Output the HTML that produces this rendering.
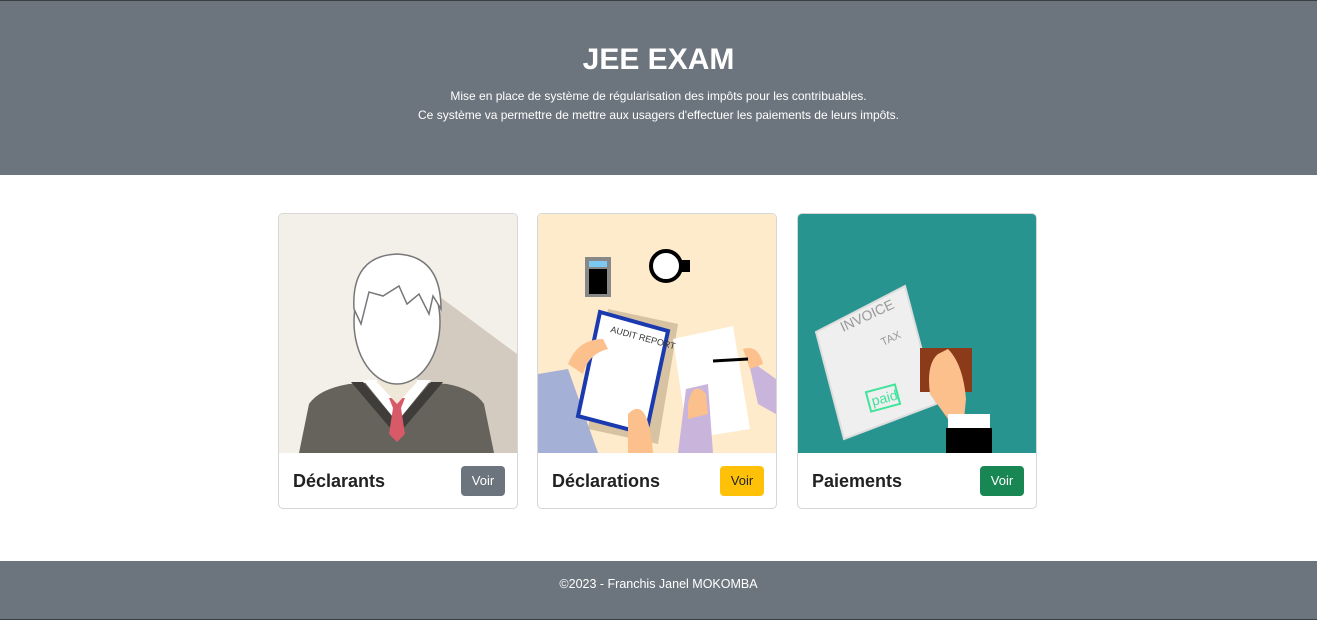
<!DOCTYPE html>
<html><head><meta charset="utf-8"><style>
*{box-sizing:border-box;margin:0;padding:0}
body{width:1317px;height:620px;background:#fff;font-family:"Liberation Sans",sans-serif;overflow:hidden;position:relative}
header{position:absolute;left:0;top:0;width:1317px;height:175px;background:#6c757d;border-top:1px solid #3a3f44;color:#fff;text-align:center}
header h1{position:absolute;top:42px;width:100%;font-size:30px;font-weight:bold}
header p{position:absolute;top:86px;width:100%;font-size:12px;line-height:19px}
.card{position:absolute;top:213px;width:240px;height:296px;border:1px solid #d6d6d6;border-radius:5px;overflow:hidden;background:#fff}
.card svg{display:block;width:238px;height:239px}
.card h3{position:absolute;left:14px;top:257px;font-size:18px;font-weight:bold;color:#222}
.btn{position:absolute;right:12px;top:252px;width:44px;height:30px;border-radius:4px;font-size:13px;line-height:30px;text-align:center}
footer{position:absolute;left:0;top:561px;width:1317px;height:59px;background:#6c757d;color:#fff;text-align:center;font-size:12.5px;line-height:46px;border-bottom:1px solid #3a3f44}
</style></head><body>
<header><h1>JEE EXAM</h1><p>Mise en place de système de régularisation des impôts pour les contribuables.<br>Ce système va permettre de mettre aux usagers d'effectuer les paiements de leurs impôts.</p></header>

<div class="card" style="left:278px">
<svg viewBox="0 0 238 239"><rect width="238" height="239" fill="#f3efe9"/>
<polygon points="130,60 238,140 238,239 140,239" fill="#d3cac0"/>
<path d="M20,239 L30,190 Q40,175 70,170 L100,168 L118,188 L136,168 L168,170 Q195,175 205,190 L215,239Z" fill="#66635c"/>
<path d="M72,168 L118,222 L164,168 L152,168 L118,208 L84,168Z" fill="#3f3d39"/>
<path d="M84,166 L118,208 L152,166Z" fill="#fff"/>
<path d="M110,184 L126,184 L122,194 L126,220 L118,228 L110,220 L114,194Z" fill="#d85a68"/>
<path d="M98,140 L98,168 L118,190 L138,168 L138,140Z" fill="#efe7d8"/>
<ellipse cx="118" cy="108" rx="43" ry="62" fill="#fff" stroke="#777" stroke-width="1.5"/>
<path d="M75,95 Q72,42 118,40 Q162,42 162,95 L154,82 L150,100 L140,80 L128,90 L120,72 L104,82 L90,78 L82,110Z" fill="#fff" stroke="#777" stroke-width="1.5"/>
</svg>
<h3>Déclarants</h3><div class="btn" style="background:#6c757d;color:#fff">Voir</div></div>

<div class="card" style="left:537px">
<svg viewBox="0 0 238 239"><rect width="238" height="239" fill="#feebcb"/>
<rect x="47" y="43" width="26" height="40" fill="#888"/><rect x="51" y="47" width="18" height="6" fill="#7bc8f0"/><rect x="51" y="55" width="18" height="25" fill="#000"/>
<circle cx="128" cy="52" r="15" fill="#fff" stroke="#000" stroke-width="4"/><rect x="143" y="46" width="9" height="12" fill="#000"/>
<polygon points="70,95 140,110 120,230 50,215" fill="#d7c3a2"/>
<polygon points="0,160 30,155 60,239 0,239" fill="#a5b0d6"/>
<polygon points="62,98 130,117 108,220 40,202" fill="#fff" stroke="#1b3ab0" stroke-width="4"/>
<polygon points="135,125 195,112 212,215 150,225" fill="#fff"/>
<text x="72" y="118" font-size="9" fill="#333" transform="rotate(15 72 118)" font-family="Liberation Sans">AUDIT REPORT</text>
<path d="M30,150 Q40,125 65,125 L70,135 Q50,140 45,160Z" fill="#fbc08b"/>
<path d="M90,200 Q110,180 115,239 L90,239Z" fill="#fbc08b"/>
<path d="M148,175 L170,170 L175,239 L140,239Z" fill="#c9b5dc"/>
<path d="M150,190 Q155,165 168,180 L170,200 L150,205Z" fill="#fbc08b"/>
<path d="M210,145 L238,165 L238,200 L220,190Z" fill="#c9b5dc"/>
<path d="M205,135 Q220,130 225,150 L212,155Z" fill="#fbc08b"/>
<line x1="175" y1="147" x2="210" y2="145" stroke="#000" stroke-width="3"/>
</svg>
<h3>Déclarations</h3><div class="btn" style="background:#ffc107;color:#222">Voir</div></div>

<div class="card" style="left:797px">
<svg viewBox="0 0 238 239"><rect width="238" height="239" fill="#289490"/>
<polygon points="18,118 107,72 138,190 46,225" fill="#efefef" stroke="#ddd" stroke-width="2"/>
<text x="45" y="118" font-size="14" fill="#999" transform="rotate(-25 45 118)" font-family="Liberation Sans">INVOICE</text>
<text x="85" y="132" font-size="11" fill="#999" transform="rotate(-25 85 132)" font-family="Liberation Sans">TAX</text>
<rect x="70" y="174" width="30" height="20" fill="none" stroke="#3fe39a" stroke-width="2" transform="rotate(-15 85 184)"/>
<text x="75" y="192" font-size="14" fill="#3fe39a" transform="rotate(-15 75 192)" font-family="Liberation Sans">paid</text>
<rect x="122" y="134" width="52" height="44" fill="#8b3a1a"/>
<path d="M132,180 Q128,150 140,140 L150,135 Q165,150 168,185 L166,205 L150,205Z" fill="#fbc08b"/>
<rect x="150" y="200" width="42" height="14" fill="#fff"/><rect x="148" y="214" width="46" height="25" fill="#000"/>
</svg>
<h3>Paiements</h3><div class="btn" style="background:#198754;color:#fff">Voir</div></div>

<footer>©2023 - Franchis Janel MOKOMBA</footer>
</body></html>
